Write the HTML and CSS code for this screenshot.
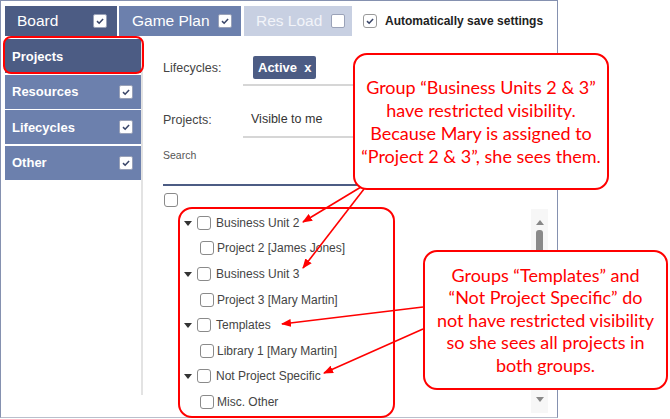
FILE: index.html
```html
<!DOCTYPE html>
<html lang="en">
<head>
  <meta charset="UTF-8" />
  <title>Filter settings</title>
  <link rel="stylesheet" href="styles.css">
</head>
<body>

<div class="page">
  <div class="frame">

    <div class="tabs">
      <div class="tab tab-dark">
        <span>Board</span>
        <span class="cb cb-tab on"><svg viewBox="0 0 14 14"><path d="M3.5 7.2 L6 9.6 L10.6 4.6" /></svg></span>
      </div>
      <div class="tab tab-mid">
        <span>Game Plan</span>
        <span class="cb cb-tab on"><svg viewBox="0 0 14 14"><path d="M3.5 7.2 L6 9.6 L10.6 4.6" /></svg></span>
      </div>
      <div class="tab tab-light">
        <span>Res Load</span>
        <span class="cb cb-tab"></span>
      </div>
      <label class="autosave">
        <span class="cb cb-small on"><svg viewBox="0 0 14 14"><path d="M3.5 7.2 L6 9.6 L10.6 4.6" /></svg></span>
        Automatically save settings
      </label>
    </div>

    <div class="body">
      <nav class="side">
        <div class="side-item active">Projects</div>
        <div class="side-item">
          <span>Resources</span>
          <span class="cb cb-tab on"><svg viewBox="0 0 14 14"><path d="M3.5 7.2 L6 9.6 L10.6 4.6" /></svg></span>
        </div>
        <div class="side-item">
          <span>Lifecycles</span>
          <span class="cb cb-tab on"><svg viewBox="0 0 14 14"><path d="M3.5 7.2 L6 9.6 L10.6 4.6" /></svg></span>
        </div>
        <div class="side-item">
          <span>Other</span>
          <span class="cb cb-tab on"><svg viewBox="0 0 14 14"><path d="M3.5 7.2 L6 9.6 L10.6 4.6" /></svg></span>
        </div>
      </nav>

      <div class="content">
        <div class="field first">
          <div class="field-label">Lifecycles:</div>
          <div class="field-value"><span class="chip">Active&nbsp;&nbsp;x</span></div>
        </div>
        <div class="field">
          <div class="field-label">Projects:</div>
          <div class="field-value text">Visible to me</div>
        </div>

        <div class="search-label">Search</div>
        <div class="search-input"></div>

        <span class="cb cb-tree select-all"></span>

        <div class="tree-wrap">
          <div class="tree">
            <div class="row group"><span class="caret"></span><span class="cb cb-tree"></span>Business Unit 2</div>
            <div class="row child"><span class="cb cb-tree"></span>Project 2 [James Jones]</div>
            <div class="row group"><span class="caret"></span><span class="cb cb-tree"></span>Business Unit 3</div>
            <div class="row child"><span class="cb cb-tree"></span>Project 3 [Mary Martin]</div>
            <div class="row group"><span class="caret"></span><span class="cb cb-tree"></span>Templates</div>
            <div class="row child"><span class="cb cb-tree"></span>Library 1 [Mary Martin]</div>
            <div class="row group"><span class="caret"></span><span class="cb cb-tree"></span>Not Project Specific</div>
            <div class="row child"><span class="cb cb-tree"></span>Misc. Other</div>
          </div>
          <div class="scroll">
            <span class="arrow-up"></span>
            <span class="thumb"></span>
            <span class="scroll-gap"></span>
            <span class="arrow-down"></span>
          </div>
        </div>
      </div>
    </div>
  </div>

  <!-- annotations on top of the screenshot -->
  <div class="mark mark-projects"></div>
  <div class="mark mark-tree"></div>

  <svg class="arrows" width="670" height="419" viewBox="0 0 670 419">
    <defs>
      <marker id="head" markerWidth="10" markerHeight="8" refX="9" refY="4" orient="auto" markerUnits="userSpaceOnUse">
        <path d="M0 0 L10 4 L0 8 Z" fill="#f00" />
      </marker>
    </defs>
    <line x1="361" y1="187" x2="303" y2="222" marker-end="url(#head)" />
    <line x1="364" y1="189" x2="303" y2="268" marker-end="url(#head)" />
    <line x1="423" y1="307" x2="282" y2="324" marker-end="url(#head)" />
    <line x1="423" y1="329" x2="324" y2="373" marker-end="url(#head)" />
  </svg>

  <div class="callout callout-one">
    Group “Business Units 2 &amp; 3”<br>
    have restricted visibility.<br>
    Because Mary is assigned to<br>
    “Project 2 &amp; 3”, she sees them.
  </div>
  <div class="callout callout-two">
    Groups “Templates” and<br>
    “Not Project Specific” do<br>
    not have restricted visibility<br>
    so she sees all projects in<br>
    both groups.
  </div>
</div>

</body>
</html>
```

FILE: styles.css
```css
body {
  margin: 0;
  background: #fff;
  font-family: "Liberation Sans", Arial, sans-serif;
  color: #333;
}

.page {
  position: relative;
  width: 670px;
  height: 419px;
  overflow: hidden;
}

.frame {
  width: 558px;
  height: 418px;
  border: 1px solid #8591b0;
  border-bottom-color: #b9bfcc;
  padding: 5px 0 0 4px;
  box-sizing: border-box;
}

/* top tabs */
.tabs {
  display: flex;
  align-items: center;
  height: 30px;
}

.tab {
  display: flex;
  align-items: center;
  justify-content: space-between;
  height: 30px;
  box-sizing: border-box;
  font-size: 15.5px;
  color: #fff;
}

.tab-dark {
  width: 112px;
  padding: 0 10px 0 12px;
  background: #4c5c84;
}

.tab-mid {
  width: 122px;
  margin-left: 2px;
  padding: 0 9px 0 13px;
  background: #6c80ad;
}

.tab-light {
  width: 108px;
  margin-left: 3px;
  padding: 0 7px 0 12px;
  background: #c8d0e2;
  color: #f2f4f9;
}

.autosave {
  display: flex;
  align-items: center;
  margin-left: 11px;
  font-size: 12px;
  font-weight: bold;
  color: #222;
}

.autosave .cb {
  margin-right: 8px;
}

/* checkboxes */
.cb {
  display: inline-block;
  box-sizing: border-box;
  background: #fff;
  flex: none;
}

.cb svg {
  display: block;
  width: 100%;
  height: 100%;
}

.cb path {
  fill: none;
  stroke: #3a4669;
  stroke-width: 1.8;
}

.cb-tab {
  width: 14px;
  height: 14px;
  border-radius: 2px;
  border: 1px solid #9aa2b8;
}

.cb-small {
  width: 14px;
  height: 14px;
  border-radius: 3px;
  border: 1px solid #9a9a9a;
}

.cb-tree {
  width: 14px;
  height: 14px;
  border-radius: 3px;
  border: 1px solid #8a8a8a;
}

/* body */
.body {
  display: flex;
  margin-top: 3px;
}

.side {
  display: flex;
  flex-direction: column;
  gap: 1.5px;
  width: 138px;
  height: 356px;
  border-right: 2px solid #e3e3e3;
  box-sizing: border-box;
}

.side-item {
  display: flex;
  align-items: center;
  justify-content: space-between;
  height: 34px;
  width: 136px;
  padding: 0 8px 0 7px;
  box-sizing: border-box;
  background: #6c80ad;
  color: #fff;
  font-size: 13px;
  font-weight: bold;
}

.side-item.active {
  background: #4c5c84;
}

.content {
  flex: 1;
  padding: 11px 9px 0 20px;
}

.field {
  display: flex;
  align-items: center;
  height: 36px;
  font-size: 12.5px;
}

.field + .field {
  margin-top: 16px;
}

.field-label {
  width: 80px;
  color: #444;
}

.field-value {
  flex: 1;
  height: 34px;
  display: flex;
  align-items: center;
  padding-left: 10px;
  border-bottom: 2px solid #d6d6d6;
}

.field-value.text {
  padding-left: 8px;
  font-size: 12.5px;
  color: #333;
}

.chip {
  display: inline-block;
  background: #4c5c84;
  color: #fff;
  font-weight: bold;
  font-size: 13px;
  padding: 4px 5px;
  border-radius: 2px;
  line-height: 15px;
}

.search-label {
  margin-top: 11px;
  font-size: 10.5px;
  color: #555;
  line-height: 13px;
}

.search-input {
  height: 22px;
  border-bottom: 2px solid #4c5c84;
}

.select-all {
  display: block;
  margin: 7px 0 0 1px;
}

/* tree list */
.tree-wrap {
  display: flex;
  margin-top: 2px;
  height: 204px;
}

.tree {
  flex: 1;
  padding-top: 1px;
}

.row {
  display: flex;
  align-items: center;
  height: 25.6px;
  font-size: 12px;
  color: #444;
}

.row.group {
  padding-left: 21px;
}

.row.group .cb {
  margin: 0 5px;
}

.row.child {
  padding-left: 37px;
}

.row.child .cb {
  margin-right: 3px;
}

.caret {
  width: 0;
  height: 0;
  border-left: 4px solid transparent;
  border-right: 4px solid transparent;
  border-top: 5px solid #333;
  margin-top: 1px;
}

.scroll {
  display: flex;
  flex-direction: column;
  align-items: center;
  width: 17px;
  padding-top: 11px;
  box-sizing: border-box;
  background: #f7f7f7;
}

.arrow-up {
  border-left: 4px solid transparent;
  border-right: 4px solid transparent;
  border-bottom: 5px solid #888;
}

.thumb {
  width: 7px;
  height: 24px;
  margin-top: 5px;
  border-radius: 3px;
  background: #8a8a8a;
}

.scroll-gap {
  flex: 1;
}

.arrow-down {
  border-left: 4px solid transparent;
  border-right: 4px solid transparent;
  border-top: 5px solid #888;
  margin-bottom: 11px;
}

/* annotations */
.mark {
  position: absolute;
  border: 2.5px solid #f00;
  box-sizing: border-box;
}

.mark-projects {
  left: 3px;
  top: 36px;
  width: 141px;
  height: 38px;
  border-radius: 8px;
}

.mark-tree {
  left: 178px;
  top: 207px;
  width: 217px;
  height: 211px;
  border-radius: 14px;
}

.arrows {
  position: absolute;
  left: 0;
  top: 0;
  pointer-events: none;
}

.arrows line {
  stroke: #f00;
  stroke-width: 1.6;
}

.callout {
  position: absolute;
  display: flex;
  align-items: center;
  justify-content: center;
  text-align: center;
  box-sizing: border-box;
  background: #fff;
  border: 2px solid #f00;
  border-radius: 14px;
  font-family: Lato, "Noto Sans", sans-serif;
  font-size: 18px;
  color: #f00;
}

.callout-one {
  left: 353px;
  top: 53px;
  width: 256px;
  height: 137px;
  line-height: 23px;
}

.callout-two {
  left: 423px;
  top: 250px;
  width: 245px;
  height: 140px;
  line-height: 22.5px;
}
```
